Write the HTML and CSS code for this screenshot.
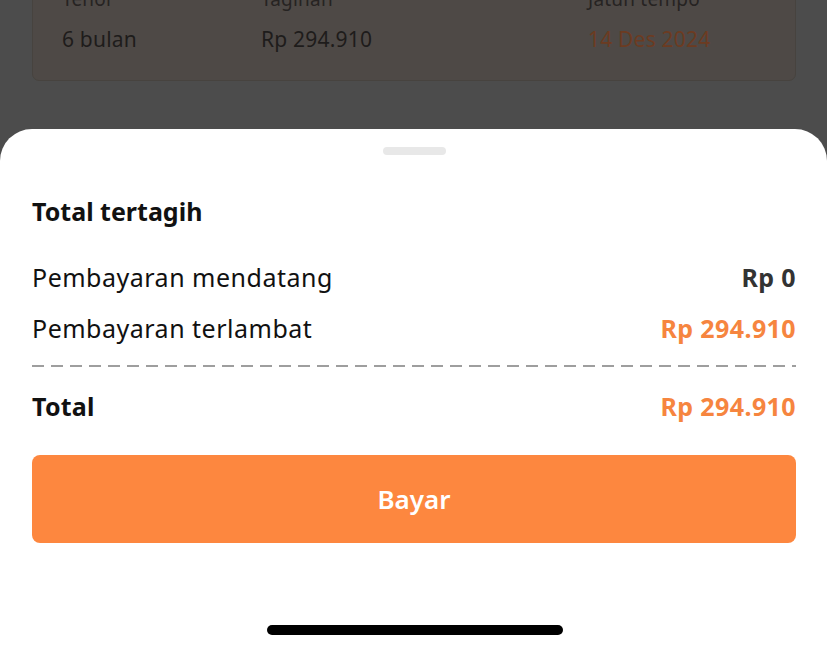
FILE: index.html
```html
<!DOCTYPE html>
<html lang="id">
<head>
<meta charset="utf-8">
<title>Total tertagih</title>
<link rel="stylesheet" href="styles.css">
</head>
<body>
<div class="screen">
  <div class="backdrop">
    <div class="loan-card">
      <div class="loan-grid">
        <span class="label">Tenor</span>
        <span class="label">Tagihan</span>
        <span class="label">Jatuh tempo</span>
        <span class="value">6 bulan</span>
        <span class="value">Rp 294.910</span>
        <span class="value due">14 Des 2024</span>
      </div>
    </div>
  </div>
  <div class="sheet">
    <div class="handle"></div>
    <h2 class="sheet-title">Total tertagih</h2>
    <div class="row row-first">
      <span class="row-label">Pembayaran mendatang</span>
      <span class="row-amount amount-dark">Rp 0</span>
    </div>
    <div class="row row-second">
      <span class="row-label">Pembayaran terlambat</span>
      <span class="row-amount amount-orange">Rp 294.910</span>
    </div>
    <div class="dashed"></div>
    <div class="row row-total">
      <span class="row-label total-label">Total</span>
      <span class="row-amount amount-orange">Rp 294.910</span>
    </div>
    <button class="pay-button" type="button">Bayar</button>
    <div class="home-indicator"></div>
  </div>
</div>
</body>
</html>
```

FILE: styles.css
```css
* {
  box-sizing: border-box;
}

html, body {
  margin: 0;
  padding: 0;
}

body {
  width: 827px;
  height: 650px;
  overflow: hidden;
  background: #4c4c4c;
  font-family: "Noto Sans", "Open Sans", sans-serif;
}

.screen {
  display: flex;
  flex-direction: column;
  width: 827px;
  height: 650px;
}

.backdrop {
  height: 129px;
  flex: none;
  overflow: hidden;
  padding: 0 31px 0 32px;
}

.loan-card {
  margin-top: -34px;
  background: #4e4946;
  border: 1px solid #47433f;
  border-radius: 7px;
  padding: 20px 29px 27px;
}

.loan-grid {
  display: grid;
  grid-template-columns: 199px 327px 1fr;
  row-gap: 14px;
}

.label {
  font-size: 19px;
  line-height: 24px;
  letter-spacing: 0.2px;
  color: #262322;
}

.value {
  font-size: 21px;
  line-height: 28px;
  letter-spacing: 0.2px;
  color: #1e1c1b;
}

.value.due {
  color: #6c3b21;
}

.sheet {
  flex: 1;
  background: #ffffff;
  border-radius: 32px 32px 0 0;
  padding: 18px 31px 0 32px;
  display: flex;
  flex-direction: column;
}

.handle {
  align-self: center;
  width: 63px;
  height: 8px;
  border-radius: 4px;
  background: #e8e8e8;
  margin-left: 1px;
}

.sheet-title {
  margin: 40px 0 0;
  font-size: 25px;
  line-height: 32px;
  font-weight: 700;
  color: #111111;
}

.row {
  display: flex;
  justify-content: space-between;
  align-items: baseline;
  font-size: 25px;
  line-height: 32px;
  letter-spacing: 0.5px;
}

.row-first {
  margin-top: 34px;
}

.row-second {
  margin-top: 19px;
}

.row-label {
  color: #111111;
}

.row-amount {
  font-weight: 700;
  letter-spacing: 0.4px;
}

.amount-dark {
  color: #333333;
}

.amount-orange {
  color: #f6853f;
}

.total-label {
  font-weight: 700;
  letter-spacing: 0.2px;
}

.dashed {
  margin-top: 21px;
  height: 2px;
  background-image: linear-gradient(to right, #9e9e9e 0 12px, transparent 12px 19px);
  background-size: 19px 2px;
  background-repeat: repeat-x;
}

.row-total {
  margin-top: 23px;
}

.pay-button {
  margin-top: 33px;
  height: 88px;
  flex: none;
  border: none;
  border-radius: 8px;
  background: #fd873f;
  color: #ffffff;
  font-family: "Noto Sans", "Open Sans", sans-serif;
  font-size: 26px;
  font-weight: 600;
  padding: 0;
}

.home-indicator {
  align-self: center;
  margin-top: 82px;
  width: 296px;
  height: 10px;
  flex: none;
  border-radius: 5px;
  background: #000000;
  margin-left: 1px;
}
```
